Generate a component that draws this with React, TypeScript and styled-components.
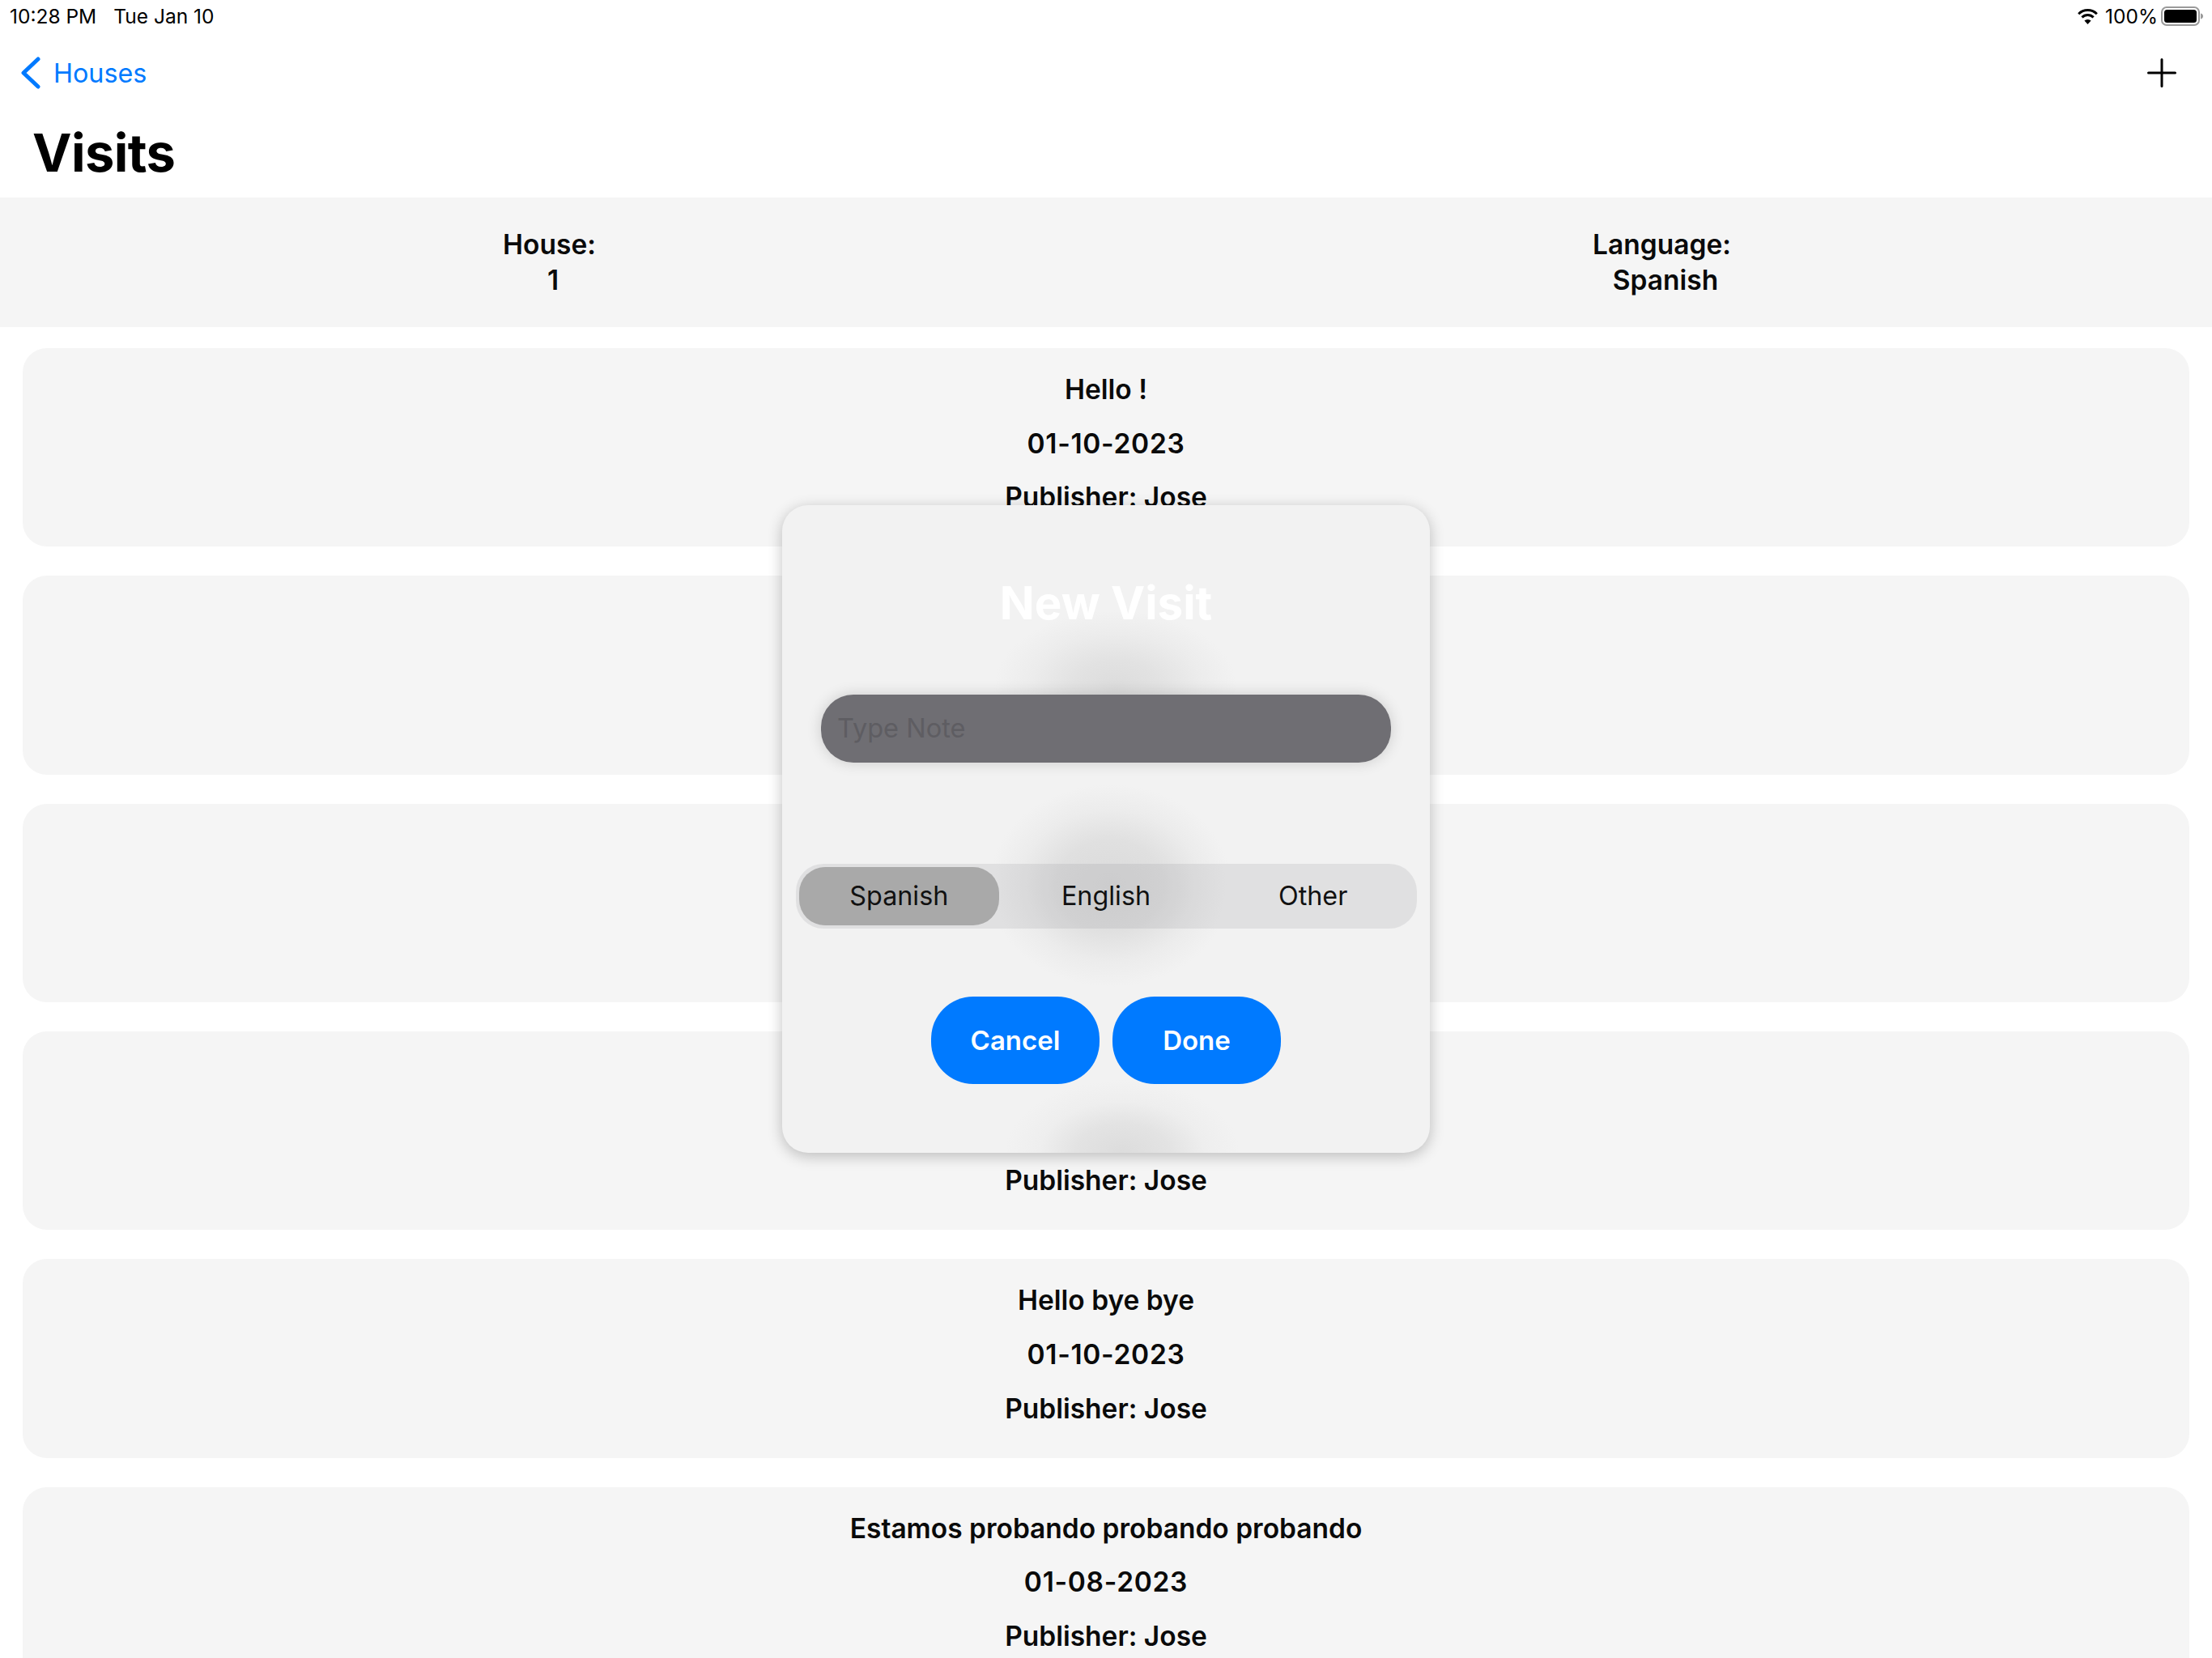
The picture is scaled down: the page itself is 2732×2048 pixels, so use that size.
import styled, { createGlobalStyle } from 'styled-components';

type Visit = {
  note: string;
  date: string;
  publisher: string;
  // how many lines, from the top, sit under the open modal
  covered: number;
};

const visits: Visit[] = [
  { note: 'Hello !', date: '01-10-2023', publisher: 'Jose', covered: 0 },
  { note: 'Hello', date: '01-10-2023', publisher: 'Jose', covered: 3 },
  { note: 'Hello', date: '01-10-2023', publisher: 'Jose', covered: 3 },
  { note: 'Hello', date: '01-10-2023', publisher: 'Jose', covered: 2 },
  { note: 'Hello bye bye', date: '01-10-2023', publisher: 'Jose', covered: 0 },
  { note: 'Estamos probando probando probando', date: '01-08-2023', publisher: 'Jose', covered: 0 },
];

const languages = ['Spanish', 'English', 'Other'];

const GlobalStyle = createGlobalStyle`
  html, body {
    margin: 0;
    padding: 0;
    background: #fff;
  }
  * {
    box-sizing: border-box;
  }
`;

const Screen = styled.div`
  position: relative;
  width: 2732px;
  height: 2048px;
  overflow: hidden;
  background: #fff;
  color: #0a0a0a;
  font-family: Inter, 'Liberation Sans', sans-serif;
`;

const StatusBar = styled.div`
  height: 40px;
  padding: 0 11px 0 12px;
  display: flex;
  align-items: center;
  justify-content: space-between;
  font-size: 24.5px;
  color: #000;
`;

const StatusGroup = styled.div<{ $gap: number }>`
  display: flex;
  align-items: center;
  gap: ${({ $gap }) => $gap}px;
`;

const NavBar = styled.div`
  height: 100px;
  padding: 0 44px 0 26px;
  display: flex;
  align-items: center;
  justify-content: space-between;
`;

const BackLink = styled.a`
  display: flex;
  align-items: center;
  gap: 16px;
  font-size: 32.3px;
  color: #007aff;
`;

const LargeTitle = styled.h1`
  height: 104px;
  margin: 0;
  padding: 0 0 8px 40px;
  display: flex;
  align-items: center;
  font-size: 65px;
  font-weight: 700;
  letter-spacing: -0.6px;
  color: #000;
`;

const InfoBand = styled.div`
  height: 160px;
  display: grid;
  grid-template-columns: 1fr 1fr;
  align-items: center;
  background: #f5f5f5;
`;

const InfoItem = styled.div<{ $shift: number }>`
  margin-left: ${({ $shift }) => $shift}px;
  text-align: center;
  font-size: 33.5px;
  font-weight: 600;
  line-height: 44px;
`;

const InfoLabel = styled.div`
  padding-right: 9px;
`;

const VisitList = styled.div`
  margin-top: 26px;
  padding: 0 28px;
  display: flex;
  flex-direction: column;
  gap: 36px;
`;

const VisitCard = styled.div`
  flex: none;
  height: 245.33px;
  padding-top: 31px;
  border-radius: 30px;
  background: #f5f5f5;
  display: flex;
  flex-direction: column;
  align-items: center;
  gap: 26px;
  font-size: 33.5px;
  font-weight: 600;
  line-height: 40.67px;
`;

const VisitLine = styled.div<{ $covered: boolean }>`
  visibility: ${({ $covered }) => ($covered ? 'hidden' : 'visible')};
`;

const VisitDate = styled(VisitLine)`
  letter-spacing: 0.7px;
`;

const Overlay = styled.div`
  position: absolute;
  inset: 0;
  display: flex;
  align-items: center;
  justify-content: center;
`;

const Modal = styled.div`
  width: 800px;
  height: 800px;
  padding-top: 84px;
  border-radius: 32px;
  background-color: #f2f2f2;
  background-image:
    radial-gradient(ellipse 150px 95px at 412px 225px, #dcdcdc 0%, #e2e2e2 35%, #ececec 70%, rgba(242, 242, 242, 0) 100%),
    radial-gradient(ellipse 150px 125px at 405px 470px, #dadada 0%, #e0e0e0 45%, #ececec 75%, rgba(242, 242, 242, 0) 100%),
    radial-gradient(ellipse 145px 90px at 420px 800px, #dcdcdc 0%, #e3e3e3 40%, #eeeeee 70%, rgba(242, 242, 242, 0) 100%);
  box-shadow: 0 4px 18px rgba(0, 0, 0, 0.24);
  display: flex;
  flex-direction: column;
  align-items: center;
`;

const ModalTitle = styled.h2`
  height: 72px;
  margin: 0 0 78px;
  display: flex;
  align-items: center;
  font-size: 56.5px;
  font-weight: 700;
  color: #fff;
`;

const NoteField = styled.div`
  width: 704px;
  height: 84px;
  padding: 0 0 2px 20px;
  border-radius: 40px;
  background: #6f6e73;
  box-shadow: 0 0 18px rgba(0, 0, 0, 0.16);
  display: flex;
  align-items: center;
  font-size: 32.5px;
  color: #5e5d62;
`;

const Segmented = styled.div`
  width: 767px;
  height: 80px;
  margin-top: 125px;
  border-radius: 34px;
  background: rgba(118, 118, 128, 0.14);
  display: grid;
  grid-template-columns: repeat(3, 1fr);
`;

const Segment = styled.div<{ $active?: boolean }>`
  margin: 4px;
  padding-bottom: 1px;
  border-radius: 32px;
  background: ${({ $active }) => ($active ? '#a9a9a9' : 'transparent')};
  display: flex;
  align-items: center;
  justify-content: center;
  font-size: 32.3px;
  color: #111;
`;

const ButtonRow = styled.div`
  margin-top: 84px;
  display: flex;
  gap: 16px;
`;

const ActionButton = styled.button`
  width: 208px;
  height: 108px;
  padding: 0;
  border: 0;
  border-radius: 52px;
  background: #007aff;
  color: #fff;
  font-family: inherit;
  font-size: 33px;
  font-weight: 600;
`;

const WifiSvg = styled.svg`
  margin-right: 4px;
`;

const WifiIcon = () => (
  <WifiSvg width="27" height="20" viewBox="0 0 27 20" fill="none">
    <path d="M2.2 7.2A16 16 0 0 1 24.8 7.2" stroke="#000" strokeWidth="3" />
    <path d="M6.4 11.4A10 10 0 0 1 20.6 11.4" stroke="#000" strokeWidth="3" />
    <path d="M13.5 20L9.4 15.6A5.8 5.8 0 0 1 17.6 15.6Z" fill="#000" />
  </WifiSvg>
);

const BatteryIcon = () => (
  <svg width="52" height="24" viewBox="0 0 52 24" fill="none">
    <rect x="1" y="1" width="46" height="22" rx="6" stroke="#9a9a9a" strokeWidth="2" />
    <rect x="4" y="4" width="40" height="16" rx="3.5" fill="#000" />
    <path d="M49 8.5C51 9 52 10.4 52 12C52 13.6 51 15 49 15.5Z" fill="#9a9a9a" />
  </svg>
);

const ChevronIcon = () => (
  <svg width="24" height="40" viewBox="0 0 24 40" fill="none">
    <path
      d="M21 3L3 20L21 37"
      stroke="#007aff"
      strokeWidth="5"
      strokeLinecap="round"
      strokeLinejoin="round"
    />
  </svg>
);

const PlusIcon = () => (
  <svg width="36" height="36" viewBox="0 0 36 36" fill="none">
    <path d="M18 1.5V34.5M1.5 18H34.5" stroke="#000" strokeWidth="3" strokeLinecap="round" />
  </svg>
);

export default function App() {
  return (
    <Screen>
      <GlobalStyle />
      <StatusBar>
        <StatusGroup $gap={21}>
          <span>10:28 PM</span>
          <span>Tue Jan 10</span>
        </StatusGroup>
        <StatusGroup $gap={4}>
          <WifiIcon />
          <span>100%</span>
          <BatteryIcon />
        </StatusGroup>
      </StatusBar>
      <NavBar>
        <BackLink>
          <ChevronIcon />
          Houses
        </BackLink>
        <PlusIcon />
      </NavBar>
      <LargeTitle>Visits</LargeTitle>
      <InfoBand>
        <InfoItem $shift={0}>
          <InfoLabel>House:</InfoLabel>
          <div>1</div>
        </InfoItem>
        <InfoItem $shift={16}>
          <InfoLabel>Language:</InfoLabel>
          <div>Spanish</div>
        </InfoItem>
      </InfoBand>
      <VisitList>
        {visits.map((visit, i) => (
          <VisitCard key={i}>
            <VisitLine $covered={visit.covered > 0}>{visit.note}</VisitLine>
            <VisitDate $covered={visit.covered > 1}>{visit.date}</VisitDate>
            <VisitLine $covered={visit.covered > 2}>Publisher: {visit.publisher}</VisitLine>
          </VisitCard>
        ))}
      </VisitList>
      <Overlay>
        <Modal>
          <ModalTitle>New Visit</ModalTitle>
          <NoteField>Type Note</NoteField>
          <Segmented>
            {languages.map((lang, i) => (
              <Segment key={lang} $active={i === 0}>
                {lang}
              </Segment>
            ))}
          </Segmented>
          <ButtonRow>
            <ActionButton>Cancel</ActionButton>
            <ActionButton>Done</ActionButton>
          </ButtonRow>
        </Modal>
      </Overlay>
    </Screen>
  );
}
